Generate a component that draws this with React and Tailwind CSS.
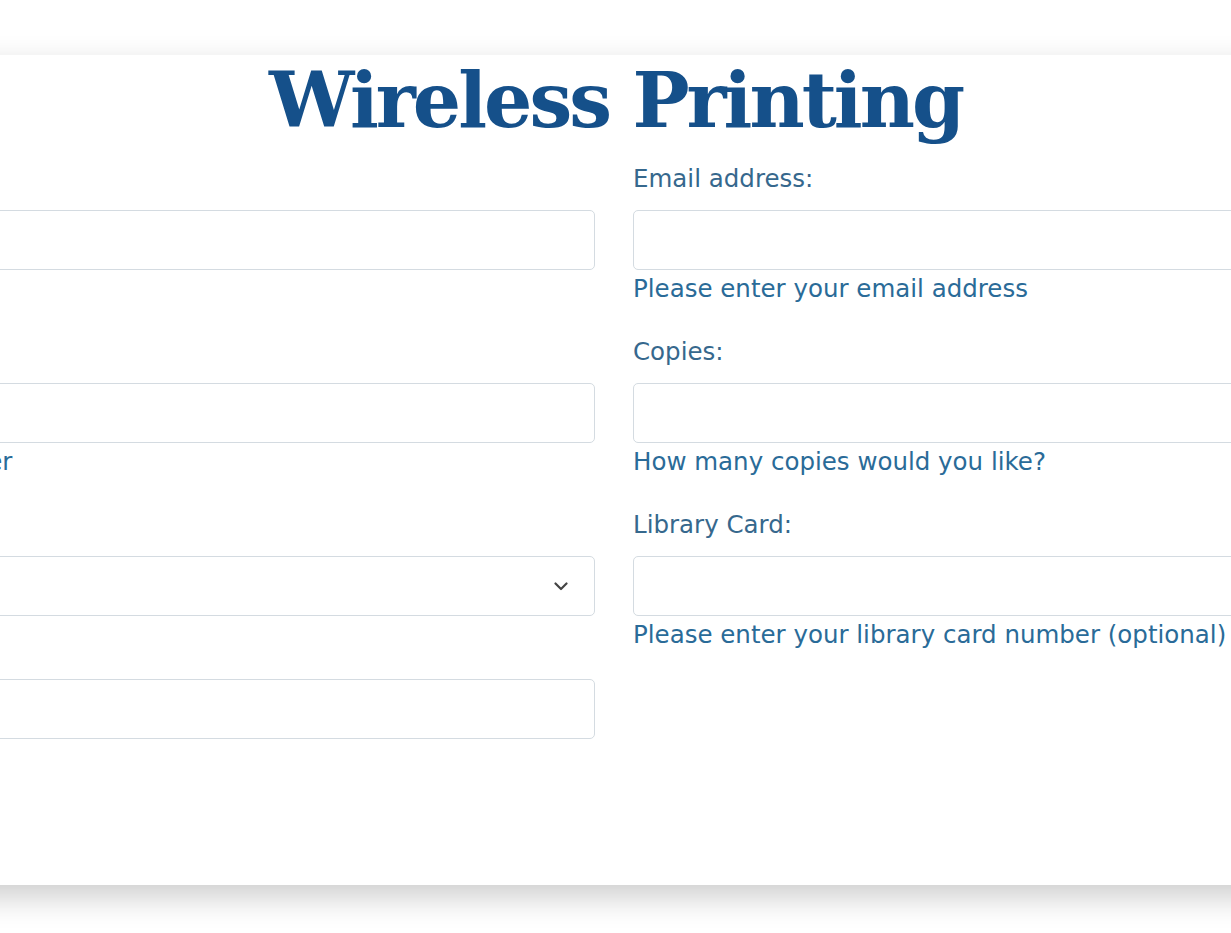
import React from "react";

const labelCls = "block text-[24.5px] leading-[30px] text-[#36688d] whitespace-nowrap";
const helpCls = "mt-[4px] text-[24.5px] leading-[30px] text-[#2a6b98] whitespace-nowrap";
const inputCls = "block w-full h-[60px] rounded-[5px] border border-[#d4dbe1] bg-white px-4 outline-none";

function Field({ label, help, last, select }) {
  return (
    <div className={last ? "" : help ? "mb-[33px]" : "mb-[17px]"}>
      <label className={labelCls}>{label}</label>
      <div className="mt-[16px]">
        {select ? (
          <div className={inputCls + " flex items-center justify-end pr-[26px]"}>
            <svg width="14" height="9" viewBox="0 0 14 9" fill="none">
              <path d="M1.5 1.5 L7 7 L12.5 1.5" stroke="#444" strokeWidth="2.2" strokeLinecap="round" strokeLinejoin="round" />
            </svg>
          </div>
        ) : (
          <input type="text" className={inputCls} />
        )}
      </div>
      {help && <p className={helpCls}>{help}</p>}
    </div>
  );
}

export default function App() {
  return (
    <div className="min-h-screen bg-white pt-[55px] overflow-hidden flex items-start justify-center font-['DejaVu_Sans',sans-serif]">
      <div className="shrink-0 w-[2100px] bg-white shadow-[0_12px_30px_rgba(0,0,0,0.2)] pt-[8px] pb-[146px] flex flex-col items-center">
        <h1 className="text-[76px] leading-none font-bold text-[#15508a] font-['DejaVu_Serif',serif] tracking-[-3px]">
          Wireless Printing
        </h1>
        {/* two columns, centred on the page */}
        <form className="grid grid-cols-2 gap-x-[38px] w-[2010px] mt-[25px] mr-[3px]">
          <div className="flex flex-col">
            <Field label="Name:" help="Please enter your name" />
            <Field label="Phone:" help="Please enter your phone number" />
            <Field label="Paper:" select />
            <Field label="File:" last />
          </div>
          <div className="flex flex-col">
            <Field label="Email address:" help="Please enter your email address" />
            <Field label="Copies:" help="How many copies would you like?" />
            <Field label="Library Card:" help="Please enter your library card number (optional)" last />
          </div>
        </form>
      </div>
    </div>
  );
}
